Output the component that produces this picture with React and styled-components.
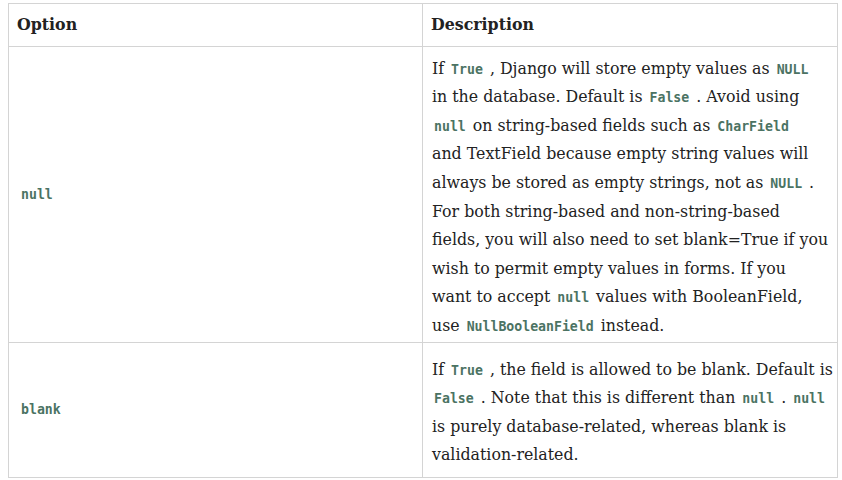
import React from "react";
import styled, { createGlobalStyle } from "styled-components";

const GlobalStyle = createGlobalStyle`
  body {
    margin: 0;
    background: #fff;
    font-family: "DejaVu Serif", "Liberation Serif", serif;
    color: #222;
  }
`;

const Table = styled.table`
  margin: 3px 4px 0 8px;
  width: 830px;
  border-collapse: collapse;
  table-layout: fixed;
  font-size: 15.8px;
  line-height: 28.6px;
`;

const Th = styled.th`
  text-align: left;
  font-weight: bold;
  padding: 7px 8px 6px;
  border: 1px solid #d4d4d4;
`;

const Td = styled.td`
  vertical-align: middle;
  padding: ${(p) => p.$pad || "8px 8px"};
  border: 1px solid #d4d4d4;
  white-space: ${(p) => (p.$lines ? "nowrap" : "normal")};
`;

const Code = styled.code`
  font-family: "DejaVu Sans Mono", "Liberation Mono", monospace;
  font-size: 13.2px;
  line-height: 1;
  font-weight: bold;
  color: #4b7363;
  padding: 0 2px;
`;

export default function App() {
  return (
    <>
      <GlobalStyle />
      <Table>
        <colgroup>
          <col style={{ width: "414px" }} />
          <col />
        </colgroup>
        <thead>
          <tr>
            <Th>Option</Th>
            <Th>Description</Th>
          </tr>
        </thead>
        <tbody>
          <tr>
            <Td $pad="8px 10px">
              <Code>null</Code>
            </Td>
            <Td $lines $pad="8px 9px 1px">
              If <Code>True</Code> , Django will store empty values as{" "}
              <Code>NULL</Code>
              <br />
              in the database. Default is <Code>False</Code> . Avoid using
              <br />
              <Code>null</Code> on string-based fields such as{" "}
              <Code>CharField</Code>
              <br />
              and TextField because empty string values will
              <br />
              always be stored as empty strings, not as <Code>NULL</Code> .
              <br />
              For both string-based and non-string-based
              <br />
              fields, you will also need to set blank=True if you
              <br />
              wish to permit empty values in forms. If you
              <br />
              want to accept <Code>null</Code> values with BooleanField,
              <br />
              use <Code>NullBooleanField</Code> instead.
            </Td>
          </tr>
          <tr>
            <Td $pad="8px 10px">
              <Code>blank</Code>
            </Td>
            <Td $lines $pad="13px 9px 7px">
              If <Code>True</Code> , the field is allowed to be blank. Default is
              <br />
              <Code>False</Code> . Note that this is different than{" "}
              <Code>null</Code> . <Code>null</Code>
              <br />
              is purely database-related, whereas blank is
              <br />
              validation-related.
            </Td>
          </tr>
        </tbody>
      </Table>
    </>
  );
}
